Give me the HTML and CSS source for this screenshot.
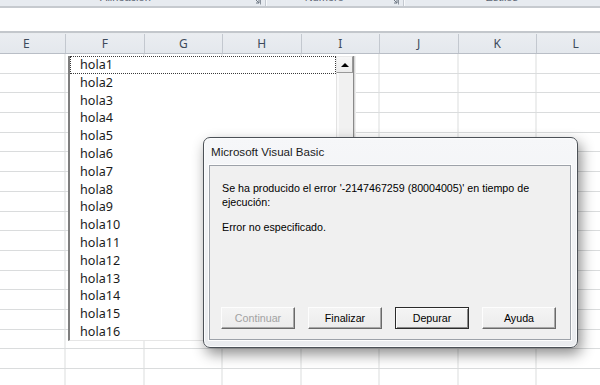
FILE: index.html
```html
<!DOCTYPE html>
<html lang="es">
<head>
    <meta charset="UTF-8">
    <title>Microsoft Visual Basic</title>
    <link rel="stylesheet" href="styles.css">
</head>
<body>
    <div class="excel">
        <!-- Ribbon group labels (cut off at the top) -->
        <div class="ribbon">
            <div class="ribbon__group ribbon__group--align">
                <span class="ribbon__label">Alineación</span>
                <svg class="ribbon__launcher" width="7" height="7" viewBox="0 0 7 7"><path d="M0.5 0.5h6v6" fill="none" stroke="#8a929c"/><path d="M1 1l4 4M5 2v3H2" fill="none" stroke="#6f7884"/></svg>
            </div>
            <div class="ribbon__group ribbon__group--number">
                <span class="ribbon__label">Número</span>
                <svg class="ribbon__launcher" width="7" height="7" viewBox="0 0 7 7"><path d="M0.5 0.5h6v6" fill="none" stroke="#8a929c"/><path d="M1 1l4 4M5 2v3H2" fill="none" stroke="#6f7884"/></svg>
            </div>
            <div class="ribbon__group ribbon__group--styles">
                <span class="ribbon__label">Estilos</span>
            </div>
        </div>

        <div class="formula"></div>

        <!-- Column headers -->
        <div class="headers">
            <div class="headers__col">E</div>
            <div class="headers__col">F</div>
            <div class="headers__col">G</div>
            <div class="headers__col">H</div>
            <div class="headers__col">I</div>
            <div class="headers__col">J</div>
            <div class="headers__col">K</div>
            <div class="headers__col">L</div>
        </div>

        <div class="sheet"></div>

        <!-- ListBox control on the sheet -->
        <div class="listbox">
            <ul class="listbox__items">
                <li class="listbox__item listbox__item--focus">hola1</li>
                <li class="listbox__item">hola2</li>
                <li class="listbox__item">hola3</li>
                <li class="listbox__item">hola4</li>
                <li class="listbox__item">hola5</li>
                <li class="listbox__item">hola6</li>
                <li class="listbox__item">hola7</li>
                <li class="listbox__item">hola8</li>
                <li class="listbox__item">hola9</li>
                <li class="listbox__item">hola10</li>
                <li class="listbox__item">hola11</li>
                <li class="listbox__item">hola12</li>
                <li class="listbox__item">hola13</li>
                <li class="listbox__item">hola14</li>
                <li class="listbox__item">hola15</li>
                <li class="listbox__item">hola16</li>
            </ul>
            <div class="scroll">
                <div class="scroll__up"><span class="scroll__arrow"></span></div>
                <div class="scroll__track"></div>
            </div>
        </div>

        <!-- Error dialog -->
        <div class="dialog">
            <div class="dialog__title">Microsoft Visual Basic</div>
            <div class="dialog__body">
                <p class="dialog__text">Se ha producido el error '-2147467259 (80004005)' en tiempo de ejecución:</p>
                <p class="dialog__text dialog__text--error">Error no especificado.</p>
                <div class="dialog__buttons">
                    <button class="btn" disabled>Continuar</button>
                    <button class="btn">Finalizar</button>
                    <button class="btn btn--default">Depurar</button>
                    <button class="btn">Ayuda</button>
                </div>
            </div>
        </div>
    </div>
</body>
</html>
```

FILE: styles.css
```css
:root {
	/* COLORS */
	--grid: #dadcdd;
	--header: #e4e8ed;
	--header-line: #c3c8cf;
	--face: #f0f0f0;

	/* SIZES */
	--col: 78.5px;
	--row: 19.69px;
}

* {
	box-sizing: border-box;
}

html,
body {
	margin: 0;
	height: 100%;
	overflow: hidden;
	background: #fff;
}

body {
	font-family: "Liberation Sans", Arial, sans-serif;
}

.excel {
	display: flex;
	flex-direction: column;
	height: 385px;
	position: relative;
	width: 600px;
}

/* RIBBON */
.ribbon {
	background: #e7ebf0;
	border-bottom: 2px solid #c6cacf;
	display: flex;
	flex: none;
	height: 8px;
	overflow: hidden;
}

.ribbon__group {
	align-items: flex-end;
	border-right: 1px solid #c4c9d0;
	box-shadow: 1px 0 0 #f7f9fb;
	display: flex;
	height: 6px;
	justify-content: center;
	position: relative;
}

.ribbon__group--align {
	padding-right: 14px;
	width: 273px;
}

.ribbon__group--number {
	padding-right: 20px;
	width: 141px;
}

.ribbon__group--styles {
	border-right: none;
	width: 202px;
}

.ribbon__label {
	color: #5b6472;
	font-size: 11px;
	line-height: 11px;
	margin-bottom: 3px;
}

.ribbon__launcher {
	position: absolute;
	right: 4px;
	top: -2px;
}

.formula {
	border-bottom: 2px solid #c3c7cc;
	flex: none;
	height: 25px;
}

/* HEADERS */
.headers {
	background: linear-gradient(#eaedf1, var(--header));
	border-bottom: 1px solid #b9bec6;
	border-top: 1px solid #e9ecef;
	display: flex;
	flex: none;
	height: 21px;
	margin-left: -12.5px;
}

.headers__col {
	border-right: 1px solid var(--header-line);
	color: #3d4a5b;
	flex: none;
	font-family: "Noto Sans", sans-serif;
	font-size: 12px;
	line-height: 19px;
	text-align: center;
	width: var(--col);
}

.sheet {
	background-image:
		repeating-linear-gradient(90deg, transparent 0 77.5px, var(--grid) 77.5px 78.5px),
		repeating-linear-gradient(180deg, transparent 0 18.69px, var(--grid) 18.69px 19.69px);
	background-position: -12.5px 0, 0 0;
	flex: 1;
}

/* LISTBOX */
.listbox {
	background: #fff;
	border-bottom: 1px solid #e6e6e6;
	border-left: 2px solid #7f7f7f;
	border-right: 1px solid #8a8a8a;
	box-shadow: 1px 0 0 #d6d6d6, 2px 0 0 #eee;
	display: flex;
	height: 285px;
	left: 68px;
	position: absolute;
	top: 56px;
	width: 286px;
}

.listbox__items {
	flex: 1;
	list-style: none;
	margin: 0;
	overflow: hidden;
	padding: 0;
}

.listbox__item {
	color: #1b1b1b;
	font-family: "Noto Sans", sans-serif;
	font-size: 12.6px;
	height: 17.8px;
	line-height: 17.8px;
	padding-left: 10px;
}

.listbox__item--focus {
	outline: 1px dotted #3a3a3a;
	outline-offset: -1px;
}

.scroll {
	display: flex;
	flex-direction: column;
	width: 17px;
}

.scroll__up {
	align-items: center;
	background: linear-gradient(#f7f7f7, #ececec);
	border: 1px solid #bdbdbd;
	border-color: #e8e8e8 #9a9a9a #9a9a9a #e8e8e8;
	display: flex;
	height: 17px;
	justify-content: center;
}

.scroll__arrow {
	border-bottom: 4px solid #000;
	border-left: 4px solid transparent;
	border-right: 4px solid transparent;
	height: 0;
	width: 0;
}

.scroll__track {
	background: #f1f1f1;
	border-left: 1px solid #e2e2e2;
	box-shadow: inset 2px 0 0 #fafafa;
	flex: 1;
}

/* DIALOG */
.dialog {
	background: linear-gradient(#f6f7f9, #eaecef);
	border: 1px solid #4c5157;
	border-radius: 7px;
	box-shadow: inset 0 0 0 1px #fbfcfd, 3px 6px 14px rgba(0, 0, 0, 0.45);
	display: flex;
	flex-direction: column;
	height: 211px;
	left: 203px;
	padding: 0 6px 7px 5px;
	position: absolute;
	top: 137px;
	width: 375px;
}

.dialog__title {
	color: #1a1a1a;
	flex: none;
	font-size: 11.6px;
	height: 27px;
	line-height: 28px;
	padding-left: 2px;
}

.dialog__body {
	background: var(--face);
	border: 1px solid #9da2a9;
	box-shadow: 0 0 0 1px #fdfdfd;
	display: flex;
	flex: 1;
	flex-direction: column;
	padding: 15px 12px 10px 12px;
}

.dialog__text {
	color: #000;
	font-size: 10.7px;
	line-height: 14px;
	margin: 0;
	padding-right: 20px;
}

.dialog__text--error {
	margin-top: 11px;
}

.dialog__buttons {
	display: flex;
	gap: 13px;
	margin-left: -1px;
	margin-top: auto;
}

.btn {
	background: linear-gradient(#f4f4f4, #ececec);
	border: 1px solid;
	border-color: #fdfdfd #6a6a6a #6a6a6a #fdfdfd;
	box-shadow: inset -1px -1px 0 #a8a8a8, 0 0 0 0 transparent;
	color: #000;
	font-family: "Liberation Sans", Arial, sans-serif;
	font-size: 10.7px;
	height: 22px;
	padding: 0;
	width: 74px;
}

.btn:disabled {
	color: #a2a2a2;
}

.btn--default {
	border-color: #2b2b2b;
	box-shadow: inset 1px 1px 0 #fdfdfd, inset -1px -1px 0 #8a8a8a;
}
```
